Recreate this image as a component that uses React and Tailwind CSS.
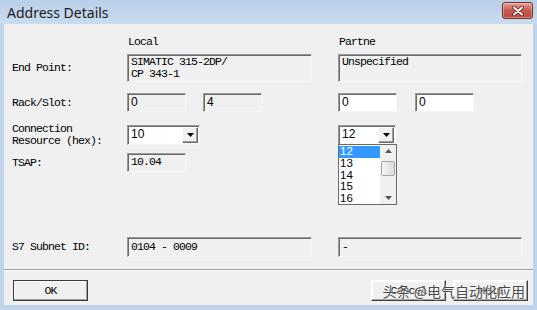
import React from "react";

const mono = { fontFamily: '"Liberation Mono", "DejaVu Sans Mono", monospace' };
const sans = { fontFamily: '"Liberation Sans", Arial, sans-serif' };

const sunken =
  "border border-t-[#9a9a9a] border-l-[#9a9a9a] border-r-[#f7f7f7] border-b-[#f7f7f7] shadow-[inset_1px_1px_0_#6a6a6a]";

const monoText = "text-[11.5px] tracking-[-0.9px] leading-[12px]";

function Box({ w, h, white, children, font = "mono", className = "" }) {
  return (
    <div
      className={`${sunken} ${white ? "bg-white" : "bg-[#f0f0f0]"} ${w} ${h} pl-[3px] pt-[1px] overflow-hidden text-black ${
        font === "mono" ? monoText : "text-[12px] leading-[15px]"
      } ${className}`}
      style={font === "mono" ? mono : sans}
    >
      {children}
    </div>
  );
}

function Arrow({ up }) {
  return (
    <svg width="7" height="4" viewBox="0 0 7 4">
      <path d={up ? "M0 4h7L3.5 0z" : "M0 0h7L3.5 4z"} fill={up ? "#555" : "#555"} />
    </svg>
  );
}

function Combo({ w, value }) {
  return (
    <div className={`${sunken} bg-white ${w} h-[20px] flex items-stretch`}>
      <div className="flex-1 pl-[3px] text-[12px] leading-[17px] text-black" style={sans}>
        {value}
      </div>
      <div className="w-[16px] m-[1px] bg-[#f0f0f0] border border-t-white border-l-white border-r-[#6a6a6a] border-b-[#6a6a6a] shadow-[inset_-1px_-1px_0_#a0a0a0] flex items-center justify-center">
        <svg width="7" height="4" viewBox="0 0 7 4">
          <path d="M0 0h7L3.5 4z" fill="#000" />
        </svg>
      </div>
    </div>
  );
}

function Label({ children }) {
  return (
    <div className={`w-[115px] shrink-0 ${monoText} text-black`} style={mono}>
      {children}
    </div>
  );
}

function Btn({ children, def, w = "w-[75px]" }) {
  return (
    <div
      className={`${w} h-[21px] bg-[#f0f0f0] border ${
        def ? "border-[#3a3a3a]" : "border-t-white border-l-white border-r-[#404040] border-b-[#404040]"
      } shadow-[inset_-1px_-1px_0_#a0a0a0,inset_1px_1px_0_#ffffff] flex items-center justify-center ${monoText} text-black`}
      style={mono}
    >
      {children}
    </div>
  );
}

export default function App() {
  return (
    <div className="w-[537px] h-[310px] bg-[#bfd4eb] flex flex-col relative overflow-hidden">
      {/* title bar */}
      <div className="h-[24px] shrink-0 flex items-center justify-between pl-[7px] pr-[4px] bg-gradient-to-b from-[#b8cfe9] to-[#c9dbef]">
        <span className="text-[14px] text-[#1b1b1b]" style={{ fontFamily: '"Noto Sans", "Open Sans", sans-serif' }}>
          Address Details
        </span>
        <div className="w-[31px] h-[17px] mb-[3px] rounded-[3px] border border-[#7a2a22] bg-gradient-to-b from-[#e0a396] via-[#c8584e] to-[#c04a3e] flex items-center justify-center shadow-[inset_0_0_0_1px_rgba(255,255,255,0.35)]">
          <svg width="12" height="10" viewBox="0 0 12 10">
            <path d="M2 1.5L10 8.5M10 1.5L2 8.5" stroke="#5a1a14" strokeWidth="3.6" strokeLinecap="round" />
            <path d="M2 1.5L10 8.5M10 1.5L2 8.5" stroke="#ffffff" strokeWidth="2" strokeLinecap="round" />
          </svg>
        </div>
      </div>

      {/* client area */}
      <div className="flex-1 mx-[4px] mb-[5px] bg-[#f0f0f0] flex flex-col pl-[8px] relative">
        {/* header */}
        <div className={`flex mt-[12px] h-[12px] ${monoText} text-black`} style={mono}>
          <div className="w-[116px]" />
          <div className="w-[211px]">Local</div>
          <div>Partne</div>
        </div>

        {/* End point */}
        <div className="flex items-center mt-[6px]">
          <Label>End Point:</Label>
          <Box w="w-[185px]" h="h-[28px]">
            SIMATIC 315-2DP/
            <br />
            CP 343-1
          </Box>
          <Box w="w-[184px]" h="h-[28px]" className="ml-[26px]">
            Unspecified
          </Box>
        </div>

        {/* Rack/Slot */}
        <div className="flex items-center mt-[11px]">
          <Label>Rack/Slot:</Label>
          <div className="w-[211px] flex gap-[17px]">
            <Box w="w-[59px]" h="h-[19px]" font="sans">0</Box>
            <Box w="w-[59px]" h="h-[19px]" font="sans">4</Box>
          </div>
          <div className="flex gap-[18px]">
            <Box w="w-[59px]" h="h-[19px]" font="sans" white>0</Box>
            <Box w="w-[59px]" h="h-[19px]" font="sans" white>0</Box>
          </div>
        </div>

        {/* Connection resource */}
        <div className="flex items-center mt-[11px]">
          <Label>
            Connection
            <br />
            Resource (hex):
          </Label>
          <div className="w-[211px]">
            <Combo w="w-[73px]" value="10" />
          </div>
          <div className="relative">
            <Combo w="w-[58px]" value="12" />
            {/* open list */}
            <div className="absolute left-0 top-[19px] w-[59px] h-[61px] bg-white border border-[#6a6a6a] flex z-10">
              <div className="flex-1 flex flex-col text-[11.5px] leading-[11.8px] text-black pt-[1px]" style={sans}>
                <div className="bg-[#3399ff] text-white pl-[1px]">12</div>
                <div className="pl-[1px]">13</div>
                <div className="pl-[1px]">14</div>
                <div className="pl-[1px]">15</div>
                <div className="pl-[1px]">16</div>
              </div>
              <div className="w-[16px] bg-[#f0f0f0] flex flex-col items-center justify-between py-[4px]">
                <Arrow up />
                <div className="w-[14px] h-[15px] -mt-[12px] border border-[#a8a8a8] rounded-[2px] bg-gradient-to-r from-[#f4f4f4] to-[#dcdcdc]" />
                <Arrow />
              </div>
            </div>
          </div>
        </div>

        {/* TSAP */}
        <div className="flex items-center mt-[6px]">
          <Label>TSAP:</Label>
          <Box w="w-[59px]" h="h-[19px]" className="pt-[2px]">10.04</Box>
        </div>

        {/* Subnet */}
        <div className="flex items-center mt-[65px]">
          <Label>S7 Subnet ID:</Label>
          <Box w="w-[185px]" h="h-[20px]" className="pt-[3px]">0104 - 0009</Box>
          <Box w="w-[184px]" h="h-[20px]" className="ml-[26px] pt-[3px]">-</Box>
        </div>

        {/* separator */}
        <div className="-ml-[8px] mt-[12px] h-[2px] border-t border-t-[#a0a0a0] border-b border-b-white" />

        {/* buttons */}
        <div className="flex items-center mt-[9px] pl-[1px]">
          <Btn def>OK</Btn>
          <div className="ml-auto flex gap-[7px] mr-[5px]">
            <Btn>Cancel</Btn>
            <Btn>Help</Btn>
          </div>
        </div>

        {/* watermark */}
        <div
          className="absolute right-[8px] bottom-[3px] text-[14px] text-[#4a4a4a] z-20 [text-shadow:0_0_2px_#fff,0_0_2px_#fff]"
          style={{ fontFamily: '"Noto Sans CJK SC", "Noto Sans", sans-serif' }}
        >
          头条 @电气自动化应用
        </div>
      </div>
    </div>
  );
}
